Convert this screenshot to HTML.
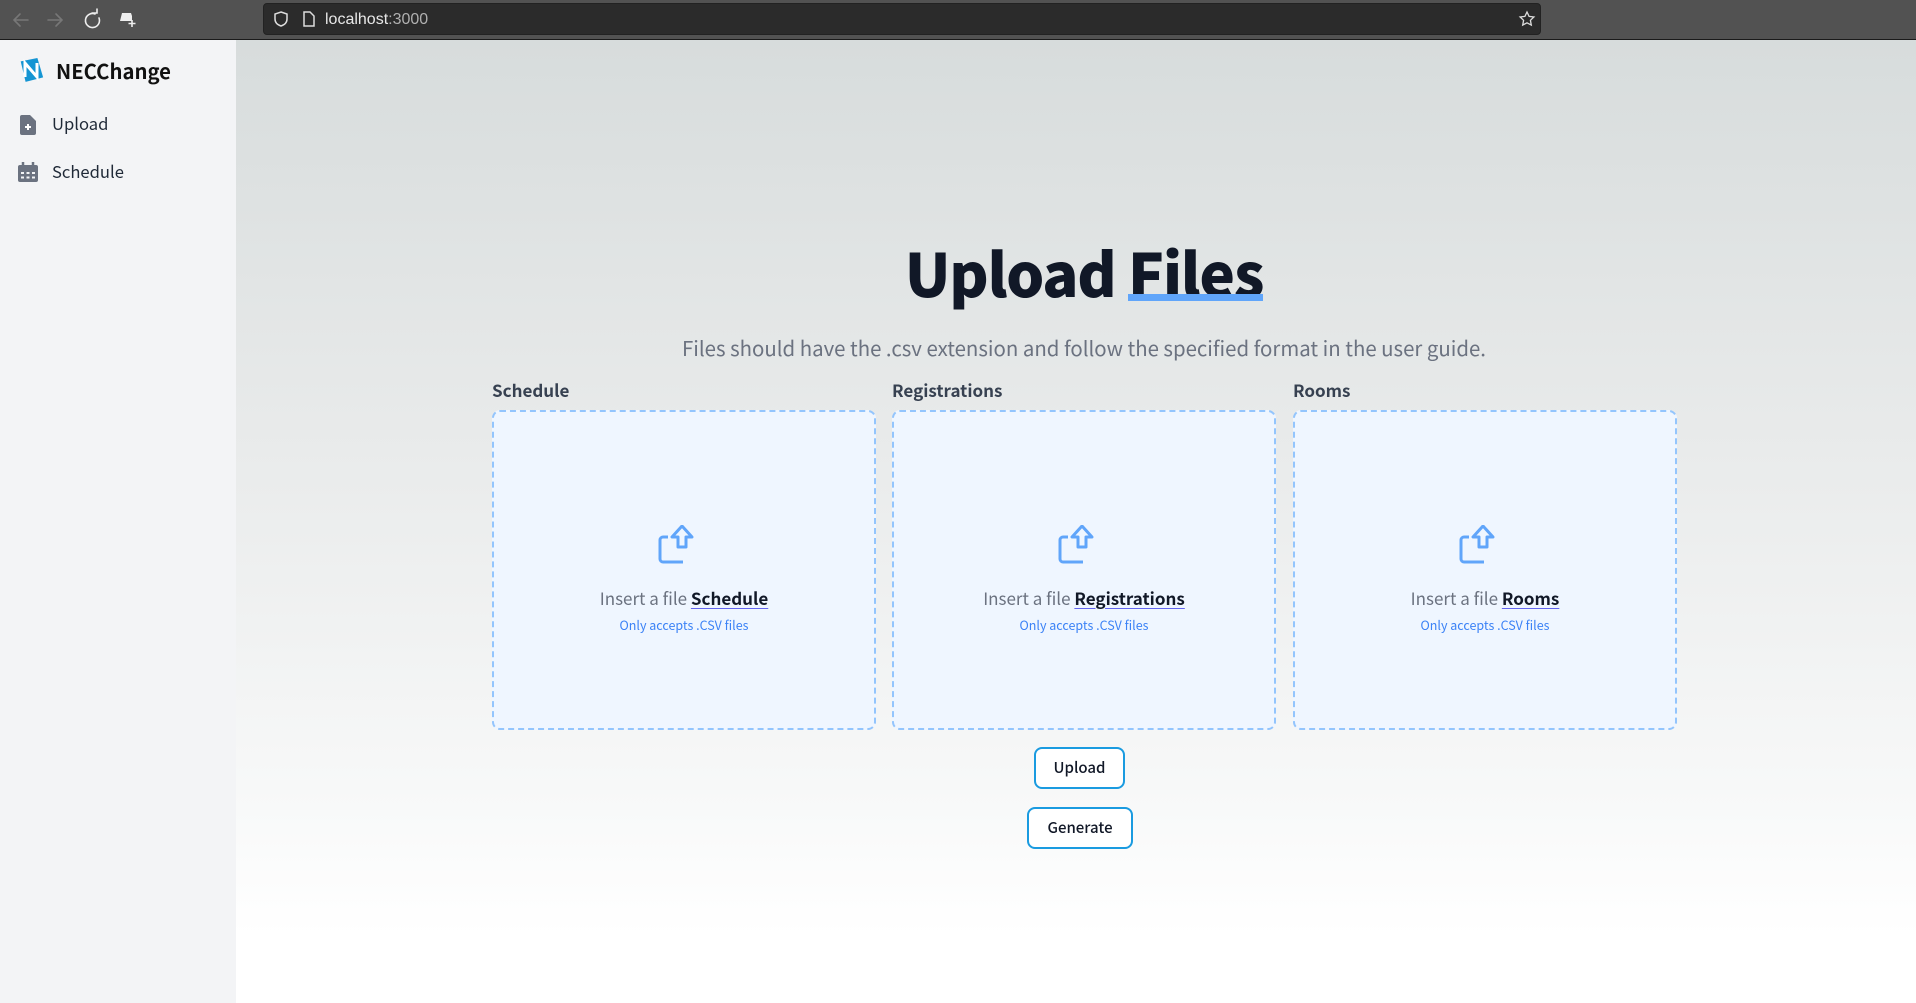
<!DOCTYPE html>
<html><head><meta charset="utf-8"><style>
*{margin:0;padding:0;box-sizing:border-box}
body{width:1916px;height:1003px;overflow:hidden;font-family:"Noto Sans CJK SC","Liberation Sans",sans-serif;position:relative;background:#fff}
.top{position:absolute;left:0;top:0;width:1916px;height:40px;background:#525252;border-bottom:1px solid #1a1a1a}
.url{position:absolute;left:263px;top:3px;width:1278px;height:32px;background:#2b2b2b;border-radius:4px;border:1px solid #222}
.url span{position:absolute;left:61px;top:7px;color:#e8e8e8;font-size:16px;font-family:"Liberation Sans",sans-serif}
.url span i{font-style:normal;color:#b0b0b0}
.side{position:absolute;left:0;top:40px;width:236px;height:963px;background:#f3f4f6}
.main{position:absolute;left:236px;top:40px;width:1680px;height:963px;background:linear-gradient(#d7dcdc 0%,#e8eaea 40%,#f8f9f9 80%,#fff 93%)}
.abs{position:absolute}
.lbl{position:absolute;top:377px;font-size:17px;font-weight:700;color:#374151}
.box{position:absolute;top:410px;width:384px;height:320px;background:#eff6ff;border:2px dashed #93c5fd;border-radius:8px;text-align:center}
.box svg{position:absolute;left:164px;top:113px}
.box .t{position:absolute;left:0;right:0;top:173px;font-size:17px;color:#6b7280}
.box .t b{color:#111827;text-decoration:underline;text-decoration-color:#6366f1;text-underline-offset:3px}
.box .s{position:absolute;left:0;right:0;top:203px;font-size:12.5px;color:#3b82f6}
.btn{position:absolute;border:2px solid #1a9be0;border-radius:8px;background:#fff;font-size:15px;font-weight:500;color:#111827;text-align:center}
</style></head><body>
<div class="top">
<svg class="abs" style="left:10px;top:8px" width="120" height="24" viewBox="0 0 120 24" fill="none" stroke-width="1.6" stroke-linecap="round">
<path d="M18 12H4M10 6l-6 6 6 6" stroke="#777"/>
<path d="M38 12h14M46 6l6 6-6 6" stroke="#777"/>
<path d="M85 6a7 7 0 1 0 4 4" stroke="#eee"/><path d="M82 5h5v-4" stroke="#eee"/>
</svg>
<svg class="abs" style="left:119px;top:12px" width="18" height="16" viewBox="0 0 18 16"><path d="M3 1h9l1 3v5H1z" fill="#eee"/><path d="M13 8v7M9.5 11.5h7" stroke="#eee" stroke-width="1.6"/></svg>
<div class="url">
<svg class="abs" style="left:8px;top:6px" width="18" height="18" viewBox="0 0 18 18" fill="none" stroke="#ddd" stroke-width="1.5"><path d="M9 2l6 2v5c0 4-3 6-6 7-3-1-6-3-6-7V4z"/></svg>
<svg class="abs" style="left:37px;top:6px" width="16" height="18" viewBox="0 0 16 18" fill="none" stroke="#ddd" stroke-width="1.5"><path d="M3 2h6l4 4v10H3z"/></svg>
<span>localhost<i>:3000</i></span>
<svg class="abs" style="left:1254px;top:6px" width="18" height="18" viewBox="0 0 18 18" fill="none" stroke="#ddd" stroke-width="1.3"><path d="M9 2l2.1 4.4 4.8.6-3.5 3.3.9 4.8L9 12.8 4.7 15.1l.9-4.8L2.1 7l4.8-.6z"/></svg>
</div>
</div>
<div class="side">
<svg class="abs" style="left:18px;top:17px" width="26" height="26" viewBox="0 0 26 26"><path d="M4 3l17 -1 3 20-18 2z" fill="#1595d3" transform="rotate(-8 13 13)"/><path d="M7 20V6l12 14V6" stroke="#fff" stroke-width="3" fill="none"/></svg>
<div class="abs" style="left:56px;top:15px;font-size:20.3px;font-weight:700;color:#111">NECChange</div>
<svg class="abs" style="left:20px;top:75px" width="16" height="20" viewBox="0 0 16 20"><path d="M2 0h8l6 6v12a2 2 0 0 1-2 2H2a2 2 0 0 1-2-2V2a2 2 0 0 1 2-2z" fill="#6b7280"/><path d="M8 9v6M5 12h6" stroke="#fff" stroke-width="2"/></svg>
<div class="abs" style="left:52px;top:71px;font-size:16.6px;color:#1f2937">Upload</div>
<svg class="abs" style="left:18px;top:122px" width="20" height="20" viewBox="0 0 20 20"><rect x="0" y="3" width="20" height="17" rx="2" fill="#6b7280"/><path d="M5 0v5M15 0v5" stroke="#6b7280" stroke-width="2.5"/><g fill="#f3f4f6"><rect x="3" y="10" width="3" height="2"/><rect x="8.5" y="10" width="3" height="2"/><rect x="14" y="10" width="3" height="2"/><rect x="3" y="14.5" width="3" height="2"/><rect x="8.5" y="14.5" width="3" height="2"/><rect x="14" y="14.5" width="3" height="2"/></g></svg>
<div class="abs" style="left:52px;top:119px;font-size:16.6px;color:#1f2937">Schedule</div>
</div>
<div class="main"></div>
<div class="abs" style="left:0;width:2168px;top:232px;text-align:center;font-size:60px;font-weight:800;color:#111827;letter-spacing:-1.3px;line-height:80px">Upload <span style="position:relative">Files<span style="position:absolute;left:0;right:0;top:66px;height:7px;background:#60a5fa"></span></span></div>
<div class="abs" style="left:236px;width:1696px;top:332px;text-align:center;font-size:20.4px;color:#6b7280">Files should have the .csv extension and follow the specified format in the user guide.</div>
<div class="lbl" style="left:492px">Schedule</div>
<div class="lbl" style="left:892px">Registrations</div>
<div class="lbl" style="left:1293px">Rooms</div>
<div class="box" style="left:492px"><svg width="46" height="40" viewBox="0 0 46 40" fill="none" stroke="#60a5fa" stroke-width="3" stroke-linejoin="round"><path d="M10 12H5a3 3 0 0 0-3 3v19a3 3 0 0 0 3 3h20"/><path d="M24 1L14 12h6v10h8V12h6z"/></svg><div class="t">Insert a file <b>Schedule</b></div><div class="s">Only accepts .CSV files</div></div>
<div class="box" style="left:892px"><svg width="46" height="40" viewBox="0 0 46 40" fill="none" stroke="#60a5fa" stroke-width="3" stroke-linejoin="round"><path d="M10 12H5a3 3 0 0 0-3 3v19a3 3 0 0 0 3 3h20"/><path d="M24 1L14 12h6v10h8V12h6z"/></svg><div class="t">Insert a file <b>Registrations</b></div><div class="s">Only accepts .CSV files</div></div>
<div class="box" style="left:1293px"><svg width="46" height="40" viewBox="0 0 46 40" fill="none" stroke="#60a5fa" stroke-width="3" stroke-linejoin="round"><path d="M10 12H5a3 3 0 0 0-3 3v19a3 3 0 0 0 3 3h20"/><path d="M24 1L14 12h6v10h8V12h6z"/></svg><div class="t">Insert a file <b>Rooms</b></div><div class="s">Only accepts .CSV files</div></div>
<div class="btn" style="left:1034px;top:747px;width:91px;height:42px;line-height:38px">Upload</div>
<div class="btn" style="left:1027px;top:807px;width:106px;height:42px;line-height:38px">Generate</div>
</body></html>
